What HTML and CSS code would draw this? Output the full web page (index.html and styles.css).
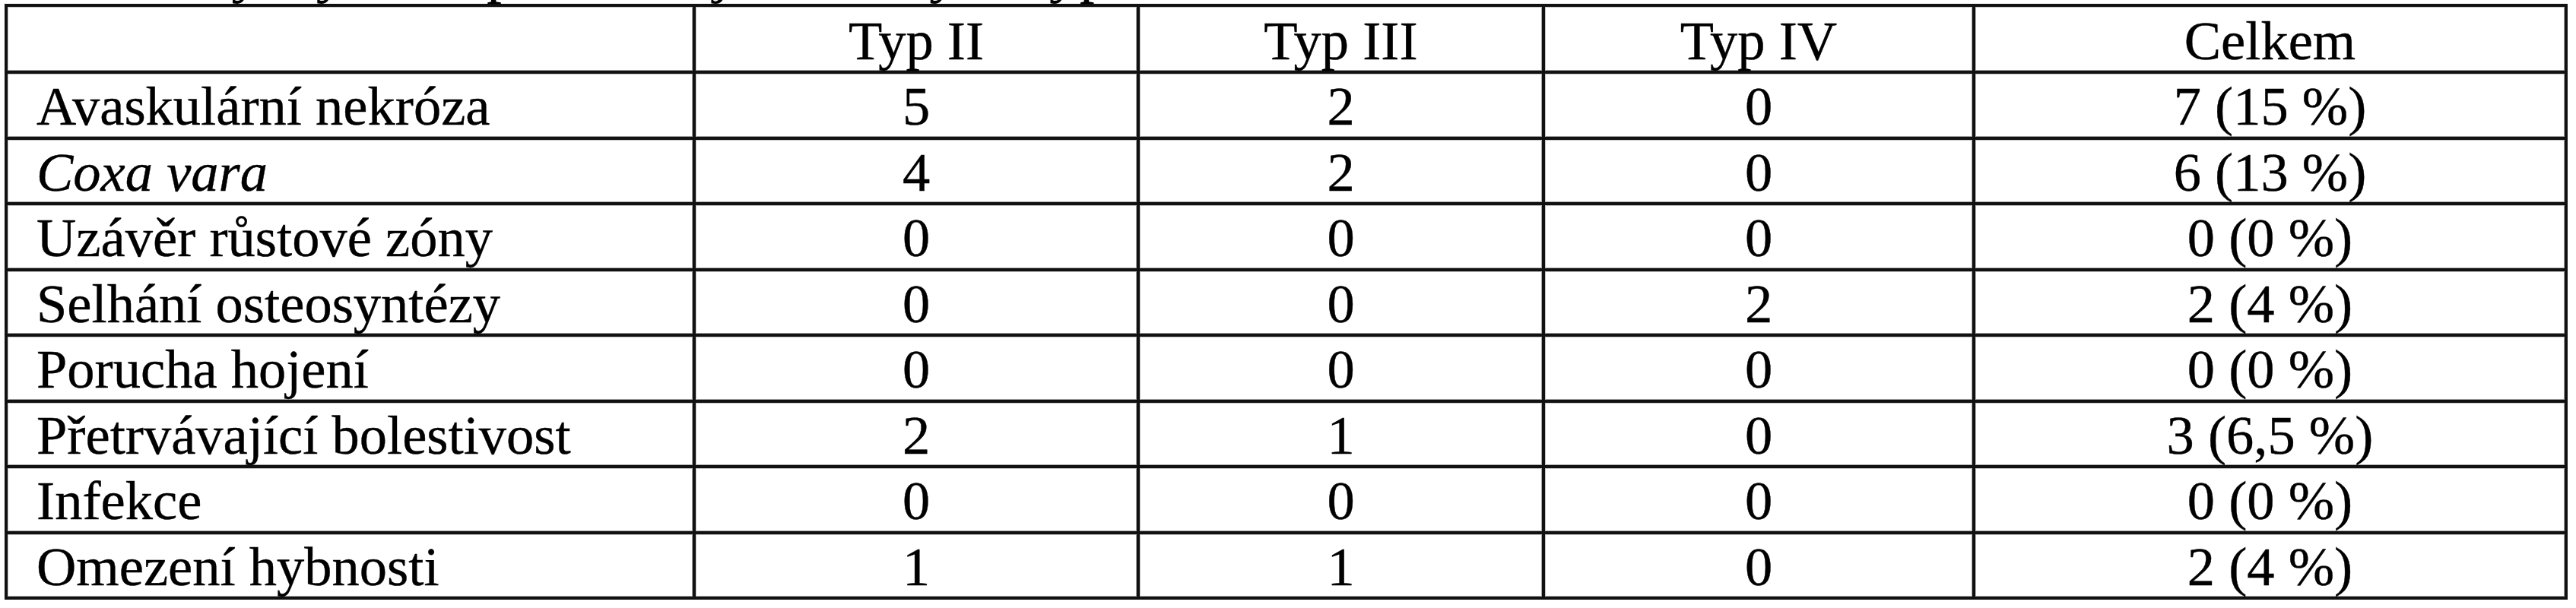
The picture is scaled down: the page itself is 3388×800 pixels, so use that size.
FILE: index.html
```html
<!DOCTYPE html>
<html lang="cs">
<head>
<meta charset="utf-8">
<title>Komplikace</title>
<link rel="stylesheet" href="styles.css">
</head>
<body>
<div class="caption">Tab. 3: Výskyt komplikací v jednotlivých typech zlomenin</div>
<div class="grid">
  <div class="cell label"></div>
  <div class="cell">Typ II</div>
  <div class="cell">Typ III</div>
  <div class="cell">Typ IV</div>
  <div class="cell">Celkem</div>

  <div class="cell label">Avaskulární nekróza</div>
  <div class="cell">5</div>
  <div class="cell">2</div>
  <div class="cell">0</div>
  <div class="cell">7 (15 %)</div>

  <div class="cell label"><em>Coxa vara</em></div>
  <div class="cell">4</div>
  <div class="cell">2</div>
  <div class="cell">0</div>
  <div class="cell">6 (13 %)</div>

  <div class="cell label">Uzávěr růstové zóny</div>
  <div class="cell">0</div>
  <div class="cell">0</div>
  <div class="cell">0</div>
  <div class="cell">0 (0 %)</div>

  <div class="cell label">Selhání osteosyntézy</div>
  <div class="cell">0</div>
  <div class="cell">0</div>
  <div class="cell">2</div>
  <div class="cell">2 (4 %)</div>

  <div class="cell label">Porucha hojení</div>
  <div class="cell">0</div>
  <div class="cell">0</div>
  <div class="cell">0</div>
  <div class="cell">0 (0 %)</div>

  <div class="cell label">Přetrvávající bolestivost</div>
  <div class="cell">2</div>
  <div class="cell">1</div>
  <div class="cell">0</div>
  <div class="cell">3 (6,5 %)</div>

  <div class="cell label">Infekce</div>
  <div class="cell">0</div>
  <div class="cell">0</div>
  <div class="cell">0</div>
  <div class="cell">0 (0 %)</div>

  <div class="cell label">Omezení hybnosti</div>
  <div class="cell">1</div>
  <div class="cell">1</div>
  <div class="cell">0</div>
  <div class="cell">2 (4 %)</div>
</div>
</body>
</html>
```
FILE: styles.css
```css
html, body {
  margin: 0;
  padding: 0;
  background: #fff;
  overflow: hidden;
}
body {
  font-family: "Liberation Serif", "Times New Roman", serif;
  color: #000;
}
.caption {
  font-size: 80px;
  line-height: 80px;
  height: 80px;
  margin-top: -79px;
  padding-left: 7px;
  white-space: nowrap;
}
.grid {
  display: grid;
  grid-template-columns: 905px 584px 533px 566px 779px;
  grid-template-rows: 88px repeat(8, 86.54px);
  width: max-content;
  margin: 4px 0 0 6px;
  border-top: 4px solid #111;
  border-left: 4px solid #111;
}
.cell {
  box-sizing: border-box;
  border-right: 4px solid #111;
  border-bottom: 4px solid #111;
  box-shadow: inset 1px 1px 0 #c4c4c4, inset -1px -1px 0 #a8a8a8;
  display: flex;
  align-items: flex-end;
  justify-content: center;
  font-size: 72.5px;
  line-height: 72.5px;
  padding-bottom: 3px;
  white-space: nowrap;
  -webkit-text-stroke: 0.4px #000;
}
.cell.label {
  justify-content: flex-start;
  padding-left: 38px;
}
.cell em {
  font-style: italic;
}
```
